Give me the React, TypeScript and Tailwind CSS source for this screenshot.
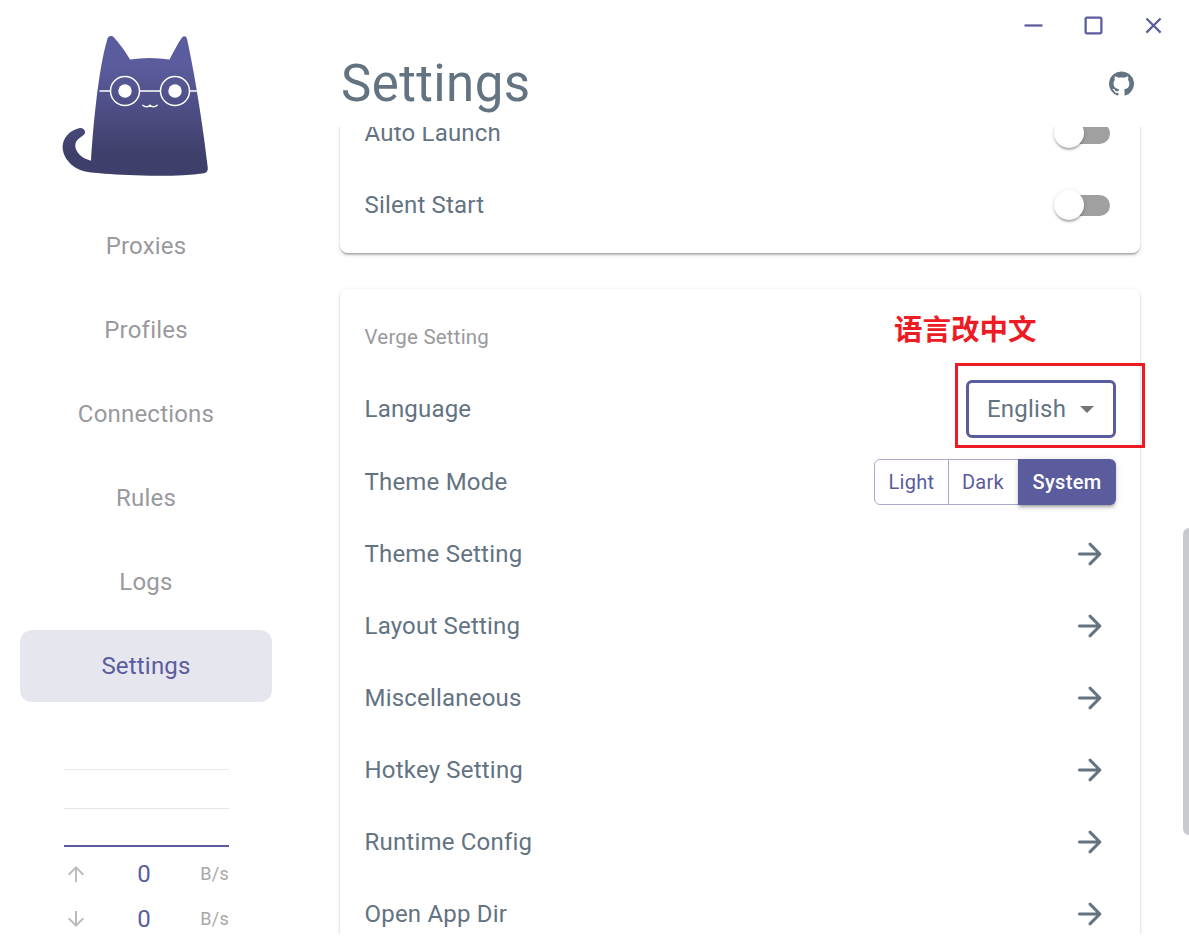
import React from "react";

const ARROW = "M5 13h11.17l-4.88 4.88c-.39.39-.39 1.03 0 1.42.39.39 1.02.39 1.41 0l6.59-6.59c.39-.39.39-1.02 0-1.41l-6.58-6.6a.9959.9959 0 0 0-1.41 0c-.39.39-.39 1.02 0 1.41L16.17 11H5c-.55 0-1 .45-1 1s.45 1 1 1z";
const GITHUB = "M12 1.27a11 11 0 00-3.48 21.46c.55.09.73-.28.73-.55v-1.84c-3.03.64-3.67-1.46-3.67-1.46-.55-1.29-1.28-1.65-1.28-1.65-.92-.65.1-.65.1-.65 1.1 0 1.73 1.1 1.73 1.1.92 1.65 2.57 1.2 3.21.92a2 2 0 01.64-1.47c-2.47-.27-5.04-1.19-5.04-5.5 0-1.1.46-2.1 1.2-2.84a3.76 3.76 0 010-2.93s.91-.28 3.11 1.1c1.8-.49 3.7-.49 5.5 0 2.1-1.38 3.02-1.1 3.02-1.1a3.76 3.76 0 010 2.93c.83.74 1.2 1.74 1.2 2.94 0 4.21-2.57 5.13-5.04 5.4.45.37.82.92.82 2.02v3.03c0 .27.1.64.73.55A11 11 0 0012 1.27";

function Icon({ d, size, className }: { d: string; size: number; className?: string }) {
  return (
    <svg width={size} height={size} viewBox="0 0 24 24" fill="currentColor" className={className}>
      <path d={d} />
    </svg>
  );
}

function Cat() {
  return (
    <svg width="148" height="142" viewBox="62 36 148 142" className="block">
      <defs>
        <linearGradient id="catfill" x1="0" y1="0" x2="0" y2="1">
          <stop offset="0.2" stopColor="#5b5c9d" />
          <stop offset="0.85" stopColor="#3f3f6b" />
        </linearGradient>
      </defs>
      <path
        fill="url(#catfill)"
        d="M107.5 38.5 C109 35.5 112 35.5 114 37.5 C119 43 126 52 130 59.5 C143 57.5 156 57.5 169.5 59.5 C174 51 178 43 182 37.5 C184 35.5 186.5 36 187 39 C194 70 203 125 207.8 168 C208 171 206.5 172.8 204 173.2 C188 175.5 170 176 150 175.7 C130 175.5 112 174.5 100 173.3 C92 172.5 84 172.3 77 168.5 C68 163.5 62.6 155 62.6 147 C62.6 138 70 130 79 128.2 C83 127.5 86 130.5 84.8 133.5 C83.5 136.5 77 138 75.5 143.5 C74 150 80 158 91 160.7 C93 130 98 70 107.5 38.5 Z"
      />
      <g fill="none" stroke="#fff" strokeWidth="1.5">
        <circle cx="125" cy="91" r="14.5" />
        <circle cx="175" cy="91" r="14.5" />
        <path d="M99.5 91H110.5M139.5 91H160.5M189.5 91H197" />
        <path d="M142.8 105.2C145 107.3 148 107.5 150 105.3C152 107.5 155 107.3 157.2 105.2" strokeLinecap="round" />
      </g>
      <circle cx="125" cy="91" r="6.7" fill="#fff" />
      <circle cx="175" cy="91" r="6.7" fill="#fff" />
    </svg>
  );
}

function NavItem({ label, active }: { label: string; active?: boolean }) {
  return (
    <div
      className={
        active
          ? "flex h-[72px] items-center justify-center rounded-[12px] bg-[#e6e6ef] text-[24px] tracking-[0.2px] text-[#5b5c9d]"
          : "flex h-[72px] items-center justify-center rounded-[12px] text-[24px] tracking-[0.2px] text-[#99999e]"
      }
    >
      {label}
    </div>
  );
}

function Rate({ d }: { d: string }) {
  return (
    <div className="flex h-[45px] items-center">
      <Icon d={d} size={24} className="text-[#bbbbbb]" />
      <div className="flex-1 pl-[2px] text-center text-[24px] text-[#5b5c9d]">0</div>
      <div className="w-[31px] text-right text-[18px] tracking-[0.3px] text-[#a8a8a8]">B/s</div>
    </div>
  );
}

function Row({ label, children }: { label: string; children?: React.ReactNode }) {
  return (
    <div className="flex h-[72px] items-center justify-between pl-[24.5px] pr-6">
      <span className="text-[24px] tracking-[0.2px] text-[#637381]">{label}</span>
      {children}
    </div>
  );
}

function Switch() {
  return (
    <div className="mr-[6px] flex h-[21px] w-[50px] items-center rounded-full bg-[#a0a0a0]">
      <div className="-ml-[6px] h-[30px] w-[30px] shrink-0 rounded-full bg-white shadow-[0_3px_2px_-1px_rgba(0,0,0,0.2),0_1px_2px_rgba(0,0,0,0.14),0_1px_5px_rgba(0,0,0,0.12)]" />
    </div>
  );
}

function ArrowRow({ label }: { label: string }) {
  return (
    <Row label={label}>
      <Icon d={ARROW} size={36} className="mr-2 text-[#637381]" />
    </Row>
  );
}

const cardClass =
  "w-[800px] rounded-[8px] bg-white shadow-[0_3px_2px_-2px_rgba(0,0,0,0.2),0_2px_2px_0_rgba(0,0,0,0.14),0_1.5px_5px_0_rgba(0,0,0,0.12)]";

export default function App() {
  return (
    <div className="relative flex h-[945px] w-[1189px] overflow-hidden bg-white font-['Roboto',sans-serif]">
      <aside className="flex w-[292px] shrink-0 flex-col px-5">
        <div className="h-[210px] pl-[42px] pt-[36px]">
          <Cat />
        </div>
        <nav className="flex flex-col gap-3">
          <NavItem label="Proxies" />
          <NavItem label="Profiles" />
          <NavItem label="Connections" />
          <NavItem label="Rules" />
          <NavItem label="Logs" />
          <NavItem label="Settings" active />
        </nav>
        <div className="ml-[44px] mt-[67px] w-[165px]">
          <div className="h-[39px] border-t border-[#e8e8e8]" />
          <div className="h-[37px] border-t border-[#e4e4e4]" />
          <div className="h-[2px] bg-[#5b5c9d]" />
          <div className="mt-[4px]">
            <Rate d="M4 12l1.41 1.41L11 7.83V20h2V7.83l5.58 5.59L20 12l-8-8-8 8z" />
            <Rate d="M20 12l-1.41-1.41L13 16.17V4h-2v12.17l-5.58-5.59L4 12l8 8 8-8z" />
          </div>
        </div>
      </aside>

      <main className="flex min-w-0 flex-1 flex-col">
        <div className="flex h-[50px] items-center justify-end pr-[6px] text-[#5b5c9d]">
          <div className="flex w-[60px] justify-center">
            <Icon d="M4 11h16v2H4z" size={27} />
          </div>
          <div className="flex w-[60px] justify-center">
            <Icon d="M18 4H6c-1.1 0-2 .9-2 2v12c0 1.1.9 2 2 2h12c1.1 0 2-.9 2-2V6c0-1.1-.9-2-2-2zm0 14H6V6h12v12z" size={27} />
          </div>
          <div className="flex w-[60px] justify-center">
            <Icon d="M19 6.41L17.59 5 12 10.59 6.41 5 5 6.41 10.59 12 5 17.59 6.41 19 12 13.41 17.59 19 19 17.59 13.41 12z" size={27} />
          </div>
        </div>
        <header className="flex h-[77px] items-start justify-between pl-[49px] pr-[54px] text-[#637381]">
          <h1 className="mt-px text-[51px] leading-[66px] tracking-[0.4px]">Settings</h1>
          <Icon d={GITHUB} size={27} className="mt-[20px]" />
        </header>
        <div className="h-[807px] overflow-hidden pl-[48px]">
          <div className="-mt-[42px]">
            <section className={cardClass + " pb-3"}>
              <div className="h-3" />
              <Row label="Auto Launch">
                <Switch />
              </Row>
              <Row label="Silent Start">
                <Switch />
              </Row>
            </section>
            <section className={cardClass + " mt-9 pt-3"}>
              <div className="flex h-[72px] items-center pl-[24.5px] text-[20.5px] tracking-[0.2px] text-[#99999e]">Verge Setting</div>
              <div className="mb-px">
                <Row label="Language">
                  <div className="flex h-[58px] w-[150px] items-center rounded-[6px] border-[3px] border-[#5b5c9d] pl-[18px]">
                    <span className="text-[24px] tracking-[0.2px] text-[#637381]">English</span>
                    <svg width="14" height="7" viewBox="0 0 14 7" className="ml-[14px]">
                      <path d="M0 0h14L7 7z" fill="#757575" />
                    </svg>
                  </div>
                </Row>
              </div>
              <Row label="Theme Mode">
                <div className="flex h-[46px] text-[20px] tracking-[0.3px]">
                  <div className="flex w-[75px] items-center justify-center rounded-l-[6px] border border-[#a9a9cf] text-[#5b5c9d]">Light</div>
                  <div className="-ml-px flex w-[70px] items-center justify-center border border-l-0 border-r-0 border-[#a9a9cf] text-[#5b5c9d]">Dark</div>
                  <div className="flex w-[98px] items-center justify-center rounded-r-[6px] bg-[#5b5c9d] font-medium text-white shadow-[0_3px_2px_-2px_rgba(0,0,0,0.2),0_3px_3px_0_rgba(0,0,0,0.14),0_1.5px_7px_0_rgba(0,0,0,0.12)]">System</div>
                </div>
              </Row>
              <ArrowRow label="Theme Setting" />
              <ArrowRow label="Layout Setting" />
              <ArrowRow label="Miscellaneous" />
              <ArrowRow label="Hotkey Setting" />
              <ArrowRow label="Runtime Config" />
              <ArrowRow label="Open App Dir" />
            </section>
          </div>
        </div>
      </main>

      {/* screenshot annotation over the UI */}
      <div className="absolute left-[894px] top-[308px] text-[28.5px] font-bold leading-[40px] text-[#ed1c24] font-['Noto_Sans_CJK_SC',sans-serif]">语言改中文</div>
      <div className="pointer-events-none absolute left-[955px] top-[363px] h-[85px] w-[190px] border-[3px] border-[#ed1c24]" />
      {/* overlay scrollbar */}
      <div className="absolute right-0 top-[528px] h-[307px] w-[6px] rounded-l-[6px] bg-[#c8cacf]" />
    </div>
  );
}
